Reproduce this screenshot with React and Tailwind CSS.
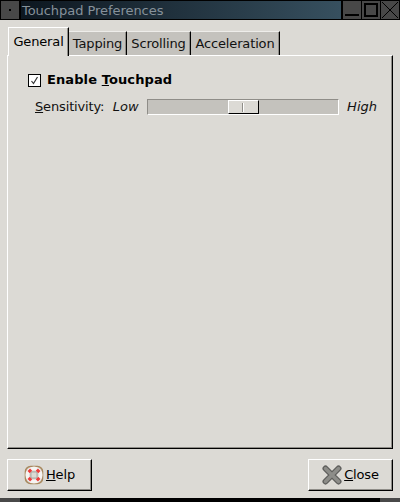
const FONT = "font-['DejaVu_Sans',sans-serif]";

function WinButton({ children }) {
  return <div className="w-[18px] h-[18px] bg-[#484848] flex items-center justify-center">{children}</div>;
}

function ActiveTab({ label }) {
  return (
    <div className="h-[29px] w-[61px] ml-[1px] border-t border-l border-t-white border-l-white border-r border-r-black shadow-[inset_-1px_0_0_#8f8d88] bg-[#dcdad5] flex items-center justify-center text-[13px] tracking-[-0.15px] text-black z-10 -mb-[1px] pb-[1px] relative">
      {label}
    </div>
  );
}

function SideTab({ label, w }) {
  return (
    <div style={{ width: w }} className="h-[24px] border-t border-t-[#eeedea] border-r border-r-black shadow-[inset_-1px_0_0_#8f8d88] bg-[#c4c2bd] flex items-center justify-center text-[13px] tracking-[-0.15px] text-[#111]">
      {label}
    </div>
  );
}

function LifeRing() {
  return (
    <svg width="20" height="20" viewBox="0 0 20 20">
      <rect x="1.5" y="1.5" width="17" height="17" rx="5" fill="#cfcbc2" stroke="#a8895f" strokeWidth="1.6" />
      <circle cx="10" cy="10" r="6.6" fill="none" stroke="#f6f4f2" strokeWidth="4" />
      <g fill="none" stroke="#ee3a3a" strokeWidth="3.6">
        <path d="M4.8 4.8 L7 7" />
        <path d="M15.2 4.8 L13 7" />
        <path d="M4.8 15.2 L7 13" />
        <path d="M15.2 15.2 L13 13" />
      </g>
      <rect x="7" y="7" width="6" height="6" rx="1" fill="#dcdad5" stroke="#9a9a9a" strokeWidth="0.7" />
    </svg>
  );
}

function CloseX() {
  return (
    <svg width="20" height="20" viewBox="0 0 20 20">
      <path d="M3.5 3.5 L16.5 16.5 M16.5 3.5 L3.5 16.5" stroke="#5e5e5c" strokeWidth="6" strokeLinecap="round" />
      <path d="M3.5 3.5 L16.5 16.5 M16.5 3.5 L3.5 16.5" stroke="#8d8d89" strokeWidth="3.4" strokeLinecap="round" />
    </svg>
  );
}

function DialogButton({ icon, first, rest, w }) {
  return (
    <div style={{ width: w }} className="h-[32px] border-t border-l border-t-white border-l-white border-r border-b border-r-black border-b-black shadow-[inset_-1px_-1px_0_#8f8d88] flex items-center justify-center gap-[2px] text-[13px] tracking-[-0.15px] text-black">
      {icon}
      <span><span className="underline">{first}</span>{rest}</span>
    </div>
  );
}

export default function App() {
  return (
    <div className={`${FONT} w-[400px] h-[502px] bg-[#dcdad5] flex flex-col overflow-hidden`}>
      <div className="h-[20px] bg-black flex items-start gap-[1px] pl-[1px] pt-[1px] shrink-0">
        <div className="w-[18px] h-[18px] bg-[#484848] flex items-center justify-center">
          <div className="w-[2px] h-[2px] bg-black" />
        </div>
        <div className="flex-1 ml-[1px] h-[18px] bg-gradient-to-r from-[#0d1720] to-[#37505f] flex items-center pl-[1px] text-[13px] tracking-[-0.05px] text-[#86919a] leading-none">
          Touchpad Preferences
        </div>
        <div className="flex gap-[1px] ml-[1px] pr-[1px]">
          <WinButton>
            <div className="w-[14px] h-[2px] bg-black mt-[10px]" />
          </WinButton>
          <WinButton>
            <div className="w-[14px] h-[14px] border-2 border-black" />
          </WinButton>
          <WinButton>
            <svg width="18" height="18" viewBox="0 0 18 18"><path d="M1 1 L17 17 M17 1 L1 17" stroke="#000" strokeWidth="1" /></svg>
          </WinButton>
        </div>
      </div>

      <div className="flex-1 flex flex-col px-[7px] pt-[8px] text-[13px]">
        <div className="flex items-end h-[27px] shrink-0">
          <ActiveTab label="General" />
          <SideTab label="Tapping" w={58} />
          <SideTab label="Scrolling" w={64} />
          <SideTab label="Acceleration" w={89} />
        </div>
        <div className="h-[394px] border-t border-l border-t-white border-l-white border-r border-r-black border-b border-b-black shadow-[inset_-1px_-1px_0_#8f8d88] pt-[14px] pl-[20px] pr-[15px]">
          <div className="flex items-center gap-[6px] h-[20px]">
            <div className="w-[13px] h-[13px] border border-black bg-white flex items-center justify-center">
              <svg width="11" height="11" viewBox="0 0 11 11"><path d="M2.5 6 L4.5 8.5 L8.5 2" fill="none" stroke="#333" strokeWidth="1.2" /></svg>
            </div>
            <span className="font-bold text-[13px] tracking-[0.1px] text-black">
              Enable <span className="underline">T</span>ouchpad
            </span>
          </div>
          <div className="flex items-center h-[20px] mt-[7px] pl-[7px]">
            <span className="text-[13px] text-[#111] w-[78px] tracking-[-0.15px]"><span className="underline">S</span>ensitivity:</span>
            <span className="italic text-[13px] text-[#111] w-[34px]">Low</span>
            <div className="w-[193px] h-[16px] border-t border-l border-t-[#8f8d88] border-l-[#8f8d88] border-r border-b border-r-white border-b-white bg-[#c4c2bd] flex items-stretch pl-[80px]">
              <div className="w-[31px] border-t border-l border-t-white border-l-white border-r border-b border-r-black border-b-black bg-[#dcdad5] flex items-center justify-center">
                <div className="w-[2px] h-[9px] bg-white border-l border-l-[#8f8d88]" />
              </div>
            </div>
            <span className="italic text-[13px] text-[#111] ml-[8px]">High</span>
          </div>
        </div>
        <div className="flex justify-between mt-[10px]">
          <DialogButton icon={<LifeRing />} first="H" rest="elp" w={85} />
          <DialogButton icon={<CloseX />} first="C" rest="lose" w={85} />
        </div>
      </div>

      <div className="h-[4px] bg-black flex justify-between shrink-0">
        <div className="w-[20px] bg-[#484848]" />
        <div className="w-[20px] bg-[#484848]" />
      </div>
    </div>
  );
}
